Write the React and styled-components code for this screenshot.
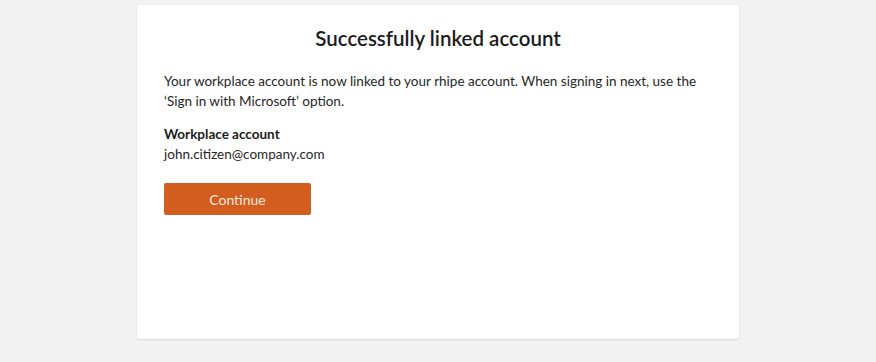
import React from 'react';
import styled, { createGlobalStyle } from 'styled-components';

const GlobalStyle = createGlobalStyle`
  html, body {
    margin: 0;
    padding: 0;
    background: #f2f2f2;
    font-family: Lato, 'Noto Sans', sans-serif;
    color: #1b1b1b;
  }
`;

const Page = styled.div`
  width: 876px;
  height: 362px;
  display: flex;
  justify-content: center;
  padding-top: 5px;
  box-sizing: border-box;
`;

const Card = styled.div`
  width: 602px;
  height: 334px;
  box-sizing: border-box;
  background: #fff;
  border-radius: 3px;
  box-shadow: 0 1px 2px rgba(0, 0, 0, 0.12);
  padding: 19px 27px;
  display: flex;
  flex-direction: column;
  align-items: flex-start;
`;

const Title = styled.h1`
  align-self: stretch;
  margin: 0;
  text-align: center;
  font-size: 20.5px;
  font-weight: 600;
  line-height: 28px;
  color: #1b1b1b;
`;

const Message = styled.p`
  margin: 19px 0 0;
  font-size: 13.5px;
  line-height: 20px;
  color: #262626;
  white-space: nowrap;
`;

const Label = styled.div`
  margin-top: 13px;
  font-size: 13.5px;
  font-weight: 700;
  line-height: 20px;
`;

const Value = styled.div`
  font-size: 13.5px;
  line-height: 20px;
  color: #262626;
`;

const Button = styled.button`
  margin-top: 19px;
  width: 147px;
  height: 32px;
  border: none;
  border-radius: 2px;
  background: #d35d1f;
  color: #fbe9df;
  font-family: inherit;
  font-size: 14px;
  cursor: pointer;
`;

export default function App() {
  return (
    <>
      <GlobalStyle />
      <Page>
        <Card>
          <Title>Successfully linked account</Title>
          <Message>
            Your workplace account is now linked to your rhipe account. When signing in next, use the
            <br />
            ‘Sign in with Microsoft’ option.
          </Message>
          <Label>Workplace account</Label>
          <Value>john.citizen@company.com</Value>
          <Button>Continue</Button>
        </Card>
      </Page>
    </>
  );
}
